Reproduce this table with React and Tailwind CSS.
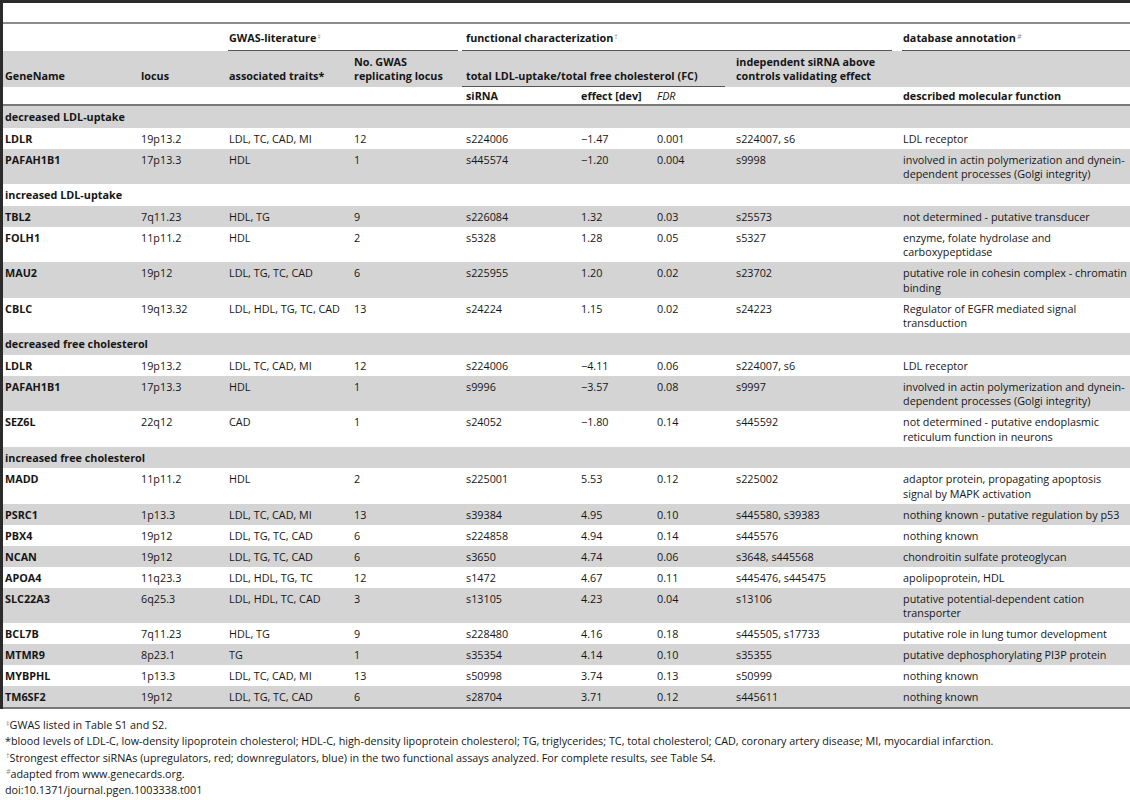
import React from 'react';

const rows = [
  { section: 'decreased LDL-uptake' },
  { gene: 'LDLR', locus: '19p13.2', traits: 'LDL, TC, CAD, MI', n: '12', sirna: 's224006', effect: '−1.47', fdr: '0.001', indep: 's224007, s6', fn: ['LDL receptor'] },
  { gene: 'PAFAH1B1', locus: '17p13.3', traits: 'HDL', n: '1', sirna: 's445574', effect: '−1.20', fdr: '0.004', indep: 's9998', fn: ['involved in actin polymerization and dynein-', 'dependent processes (Golgi integrity)'] },
  { section: 'increased LDL-uptake' },
  { gene: 'TBL2', locus: '7q11.23', traits: 'HDL, TG', n: '9', sirna: 's226084', effect: '1.32', fdr: '0.03', indep: 's25573', fn: ['not determined - putative transducer'] },
  { gene: 'FOLH1', locus: '11p11.2', traits: 'HDL', n: '2', sirna: 's5328', effect: '1.28', fdr: '0.05', indep: 's5327', fn: ['enzyme, folate hydrolase and', 'carboxypeptidase'] },
  { gene: 'MAU2', locus: '19p12', traits: 'LDL, TG, TC, CAD', n: '6', sirna: 's225955', effect: '1.20', fdr: '0.02', indep: 's23702', fn: ['putative role in cohesin complex - chromatin', 'binding'] },
  { gene: 'CBLC', locus: '19q13.32', traits: 'LDL, HDL, TG, TC, CAD', n: '13', sirna: 's24224', effect: '1.15', fdr: '0.02', indep: 's24223', fn: ['Regulator of EGFR mediated signal', 'transduction'] },
  { section: 'decreased free cholesterol' },
  { gene: 'LDLR', locus: '19p13.2', traits: 'LDL, TC, CAD, MI', n: '12', sirna: 's224006', effect: '−4.11', fdr: '0.06', indep: 's224007, s6', fn: ['LDL receptor'] },
  { gene: 'PAFAH1B1', locus: '17p13.3', traits: 'HDL', n: '1', sirna: 's9996', effect: '−3.57', fdr: '0.08', indep: 's9997', fn: ['involved in actin polymerization and dynein-', 'dependent processes (Golgi integrity)'] },
  { gene: 'SEZ6L', locus: '22q12', traits: 'CAD', n: '1', sirna: 's24052', effect: '−1.80', fdr: '0.14', indep: 's445592', fn: ['not determined - putative endoplasmic', 'reticulum function in neurons'] },
  { section: 'increased free cholesterol' },
  { gene: 'MADD', locus: '11p11.2', traits: 'HDL', n: '2', sirna: 's225001', effect: '5.53', fdr: '0.12', indep: 's225002', fn: ['adaptor protein, propagating apoptosis', 'signal by MAPK activation'] },
  { gene: 'PSRC1', locus: '1p13.3', traits: 'LDL, TC, CAD, MI', n: '13', sirna: 's39384', effect: '4.95', fdr: '0.10', indep: 's445580, s39383', fn: ['nothing known - putative regulation by p53'] },
  { gene: 'PBX4', locus: '19p12', traits: 'LDL, TG, TC, CAD', n: '6', sirna: 's224858', effect: '4.94', fdr: '0.14', indep: 's445576', fn: ['nothing known'] },
  { gene: 'NCAN', locus: '19p12', traits: 'LDL, TG, TC, CAD', n: '6', sirna: 's3650', effect: '4.74', fdr: '0.06', indep: 's3648, s445568', fn: ['chondroitin sulfate proteoglycan'] },
  { gene: 'APOA4', locus: '11q23.3', traits: 'LDL, HDL, TG, TC', n: '12', sirna: 's1472', effect: '4.67', fdr: '0.11', indep: 's445476, s445475', fn: ['apolipoprotein, HDL'] },
  { gene: 'SLC22A3', locus: '6q25.3', traits: 'LDL, HDL, TC, CAD', n: '3', sirna: 's13105', effect: '4.23', fdr: '0.04', indep: 's13106', fn: ['putative potential-dependent cation', 'transporter'] },
  { gene: 'BCL7B', locus: '7q11.23', traits: 'HDL, TG', n: '9', sirna: 's228480', effect: '4.16', fdr: '0.18', indep: 's445505, s17733', fn: ['putative role in lung tumor development'] },
  { gene: 'MTMR9', locus: '8p23.1', traits: 'TG', n: '1', sirna: 's35354', effect: '4.14', fdr: '0.10', indep: 's35355', fn: ['putative dephosphorylating PI3P protein'] },
  { gene: 'MYBPHL', locus: '1p13.3', traits: 'LDL, TC, CAD, MI', n: '13', sirna: 's50998', effect: '3.74', fdr: '0.13', indep: 's50999', fn: ['nothing known'] },
  { gene: 'TM6SF2', locus: '19p12', traits: 'LDL, TG, TC, CAD', n: '6', sirna: 's28704', effect: '3.71', fdr: '0.12', indep: 's445611', fn: ['nothing known'] },
];

// footnote marks are small and grey
const Mark = ({ children }) => (
  <sup className="text-[7px] font-normal text-[#8a8a8a] ml-[1px]">{children}</sup>
);

const cell = 'align-top pl-[5px] pt-[4px] pb-[2.5px] whitespace-nowrap';

const App = () => {
  return (
    <div className="w-[1130px] min-h-[800px] bg-white text-[#161616] font-['Open_Sans','Liberation_Sans',sans-serif] text-[10.8px] leading-[14.5px]">
      <div className="border-t-[3px] border-l-[3px] border-[#2b2b2b] pt-[19px]">
        <table className="w-full table-fixed border-separate border-spacing-0 border-t-2 border-b-2 border-t-[#8c8c8c] border-b-[#7a7a7a]">
          <colgroup>
            <col className="w-[133px]" />
            <col className="w-[88px]" />
            <col className="w-[125px]" />
            <col className="w-[112px]" />
            <col className="w-[115px]" />
            <col className="w-[76px]" />
            <col className="w-[79px]" />
            <col className="w-[167px]" />
            <col className="w-[232px]" />
          </colgroup>
          <thead className="font-bold">
            {/* group headers */}
            <tr>
              <td colSpan={2}></td>
              <td colSpan={2} className="pl-[4px] pr-[3px] pt-[7px] align-bottom">
                <div className="border-b border-[#555] pb-[4px] pl-[1px]">
                  GWAS-literature<Mark>‡</Mark>
                </div>
              </td>
              <td colSpan={4} className="pl-[1px] pr-[6px] pt-[7px] align-bottom">
                <div className="border-b border-[#555] pb-[4px] pl-[4px]">
                  functional characterization<Mark>†</Mark>
                </div>
              </td>
              <td className="pl-[4px] pt-[7px] align-bottom">
                <div className="border-b border-[#555] pb-[4px] pl-[1px]">
                  database annotation<Mark><i>#</i></Mark>
                </div>
              </td>
            </tr>
            <tr className="bg-[#d4d4d4]">
              <td className="align-bottom pl-[2px] pt-[4px] pb-[3px]">GeneName</td>
              <td className="align-bottom pl-[5px] pb-[3px]">locus</td>
              <td className="align-bottom pl-[5px] pb-[3px]">associated traits*</td>
              <td className="align-bottom pl-[5px] pb-[3px] pt-[4px]">
                No. GWAS
                <br />
                replicating locus
              </td>
              <td colSpan={3} className="align-bottom pl-[1px] pr-[6px]">
                <div className="border-b border-[#555] pb-[2px] pl-[4px]">
                  total LDL-uptake/total free cholesterol (FC)
                </div>
              </td>
              <td className="align-bottom pl-[5px] pb-[3px] pt-[4px] whitespace-nowrap">
                independent siRNA above
                <br />
                controls validating effect
              </td>
              <td></td>
            </tr>
            <tr>
              <td className="border-b-2 border-[#7a7a7a]"></td>
              <td className="border-b-2 border-[#7a7a7a]"></td>
              <td className="border-b-2 border-[#7a7a7a]"></td>
              <td className="border-b-2 border-[#7a7a7a]"></td>
              <td className="border-b-2 border-[#7a7a7a] pl-[5px] pt-[2px] pb-[1px]">siRNA</td>
              <td className="border-b-2 border-[#7a7a7a] pl-[5px] pt-[2px] pb-[1px]">effect [dev]</td>
              <td className="border-b-2 border-[#7a7a7a] pl-[5px] pt-[2px] pb-[1px] italic font-normal">FDR</td>
              <td className="border-b-2 border-[#7a7a7a]"></td>
              <td className="border-b-2 border-[#7a7a7a] pl-[5px] pt-[2px] pb-[1px]">described molecular function</td>
            </tr>
          </thead>
          <tbody>
            {rows.map((row, i) => {
              const bg = i % 2 === 0 ? 'bg-[#d4d4d4]' : 'bg-white';
              if (row.section) {
                return (
                  <tr key={i} className={bg}>
                    <td colSpan={9} className="align-top pl-[2px] pt-[4px] pb-[3px] font-bold">
                      {row.section}
                    </td>
                  </tr>
                );
              }
              return (
                <tr key={i} className={bg}>
                  <td className="align-top pl-[2px] pt-[4px] pb-[2.5px] font-bold">{row.gene}</td>
                  <td className={cell}>{row.locus}</td>
                  <td className={cell}>{row.traits}</td>
                  <td className={cell}>{row.n}</td>
                  <td className={cell}>{row.sirna}</td>
                  <td className={cell}>{row.effect}</td>
                  <td className={cell}>{row.fdr}</td>
                  <td className={cell}>{row.indep}</td>
                  <td className={cell}>
                    {row.fn.map((line, j) => (
                      <div key={j}>{line}</div>
                    ))}
                  </td>
                </tr>
              );
            })}
          </tbody>
        </table>
      </div>

      {/* footnotes */}
      <div className="pl-[5px] pt-[8px] leading-[16.25px]">
        <div><Mark>‡</Mark>GWAS listed in Table S1 and S2.</div>
        <div>
          *blood levels of LDL-C, low-density lipoprotein cholesterol; HDL-C, high-density lipoprotein cholesterol; TG,
          triglycerides; TC, total cholesterol; CAD, coronary artery disease; MI, myocardial infarction.
        </div>
        <div>
          <Mark>†</Mark>Strongest effector siRNAs (upregulators, red; downregulators, blue) in the two functional assays
          analyzed. For complete results, see Table S4.
        </div>
        <div><Mark><i>#</i></Mark>adapted from www.genecards.org.</div>
        <div>doi:10.1371/journal.pgen.1003338.t001</div>
      </div>
    </div>
  );
};

export default App;
